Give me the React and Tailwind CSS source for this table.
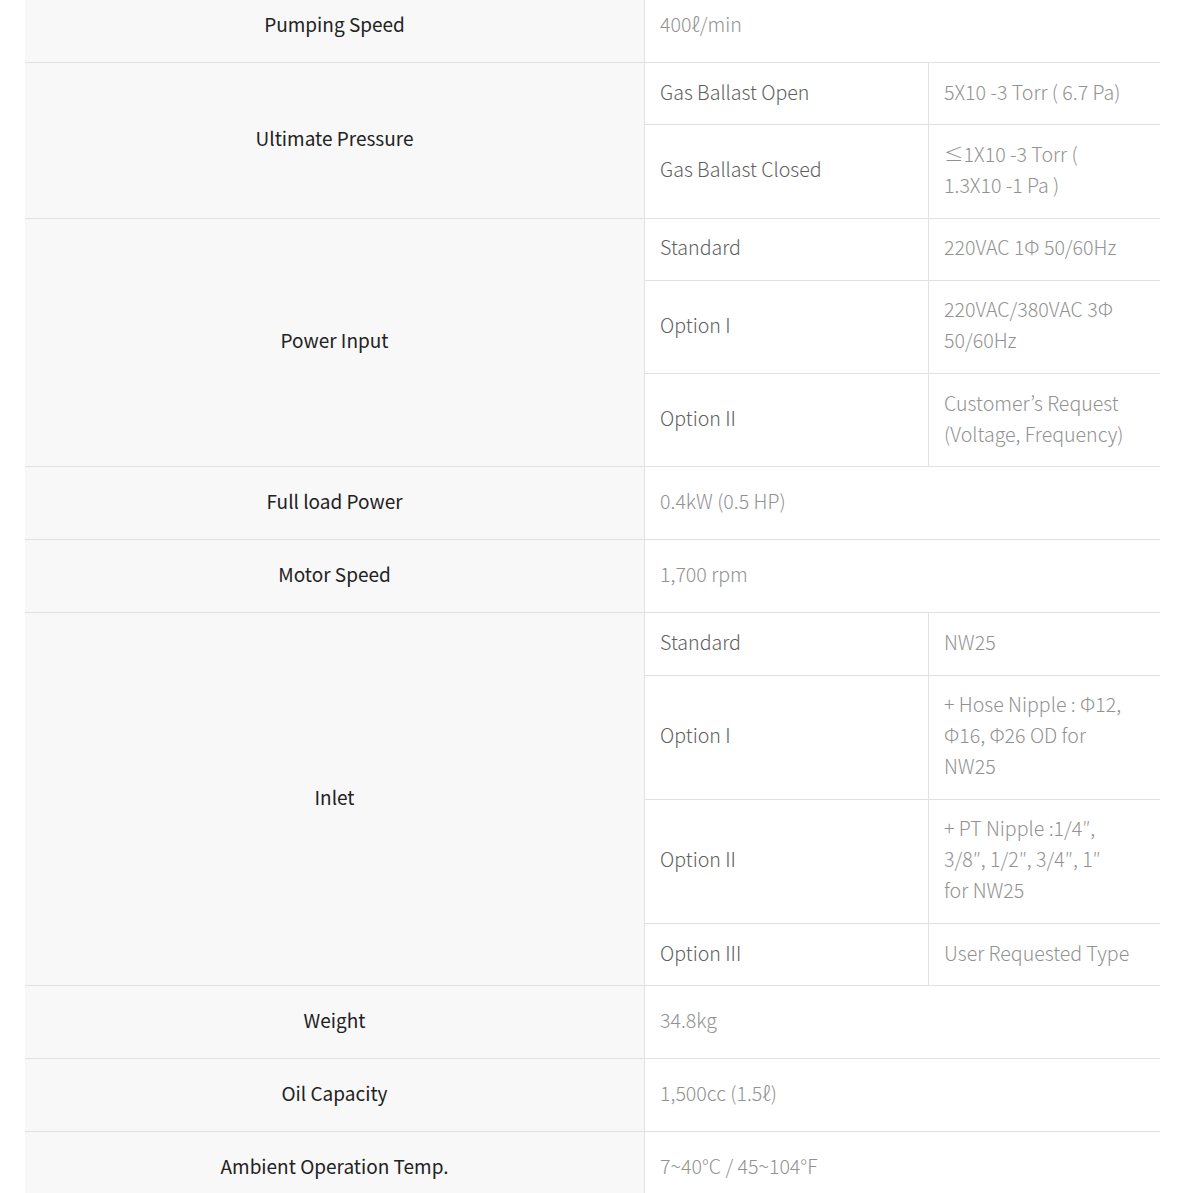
import React from "react";

const specs = [
  { label: "Pumping Speed", value: "400ℓ/min" },
  {
    label: "Ultimate Pressure",
    sub: [
      ["Gas Ballast Open", ["5X10 -3 Torr ( 6.7 Pa)"]],
      ["Gas Ballast Closed", ["≤1X10 -3 Torr (", "1.3X10 -1 Pa )"]],
    ],
  },
  {
    label: "Power Input",
    sub: [
      ["Standard", ["220VAC 1Φ 50/60Hz"]],
      ["Option I", ["220VAC/380VAC 3Φ", "50/60Hz"]],
      ["Option II", ["Customer’s Request", "(Voltage, Frequency)"]],
    ],
  },
  { label: "Full load Power", value: "0.4kW (0.5 HP)" },
  { label: "Motor Speed", value: "1,700 rpm" },
  {
    label: "Inlet",
    sub: [
      ["Standard", ["NW25"]],
      ["Option I", ["+ Hose Nipple : Φ12,", "Φ16, Φ26 OD for", "NW25"]],
      ["Option II", ["+ PT Nipple :1/4″,", "3/8″, 1/2″, 3/4″, 1″", "for NW25"]],
      ["Option III", ["User Requested Type"]],
    ],
  },
  { label: "Weight", value: "34.8kg" },
  { label: "Oil Capacity", value: "1,500cc (1.5ℓ)" },
  { label: "Ambient Operation Temp.", value: "7~40°C / 45~104°F" },
];

function SpecRow({ row }) {
  return (
    <div className="flex border-b border-[#e1e1e1]">
      {/* label */}
      <div className="w-[620px] shrink-0 bg-[#f8f8f8] border-r border-[#e1e1e1] flex items-center justify-center text-[#222] pt-[18px] pb-[23px]">
        {row.label}
      </div>
      {row.sub ? (
        <div className="flex-1 flex flex-col">
          {row.sub.map(([name, lines], i) => (
            <div
              key={name}
              className={
                "flex " + (i < row.sub.length - 1 ? "border-b border-[#e1e1e1]" : "")
              }
            >
              <div className="w-[284px] shrink-0 border-r border-[#e1e1e1] flex items-center px-[15px] pt-[12.5px] pb-[17.75px] text-[#5e5e5e] font-light text-[19.6px]">
                {name}
              </div>
              <div className="flex-1 px-[15px] pt-[12.5px] pb-[17.75px] text-[#929292] font-light text-[19.6px]">
                {lines.map((l) => (
                  <div key={l}>{l}</div>
                ))}
              </div>
            </div>
          ))}
        </div>
      ) : (
        <div className="flex-1 flex items-center px-[15px] pt-[18px] pb-[23px] text-[#929292] font-light text-[19.6px]">
          {row.value}
        </div>
      )}
    </div>
  );
}

export default function App() {
  return (
    <div className="h-[1193px] overflow-hidden bg-white">
      <div
        className="ml-[25px] w-[1135px] -mt-[10px] text-[19px] leading-[31px]"
        style={{ fontFamily: '"Noto Sans CJK KR", "Noto Sans", sans-serif' }}
      >
        {specs.map((row) => (
          <SpecRow key={row.label} row={row} />
        ))}
      </div>
    </div>
  );
}
